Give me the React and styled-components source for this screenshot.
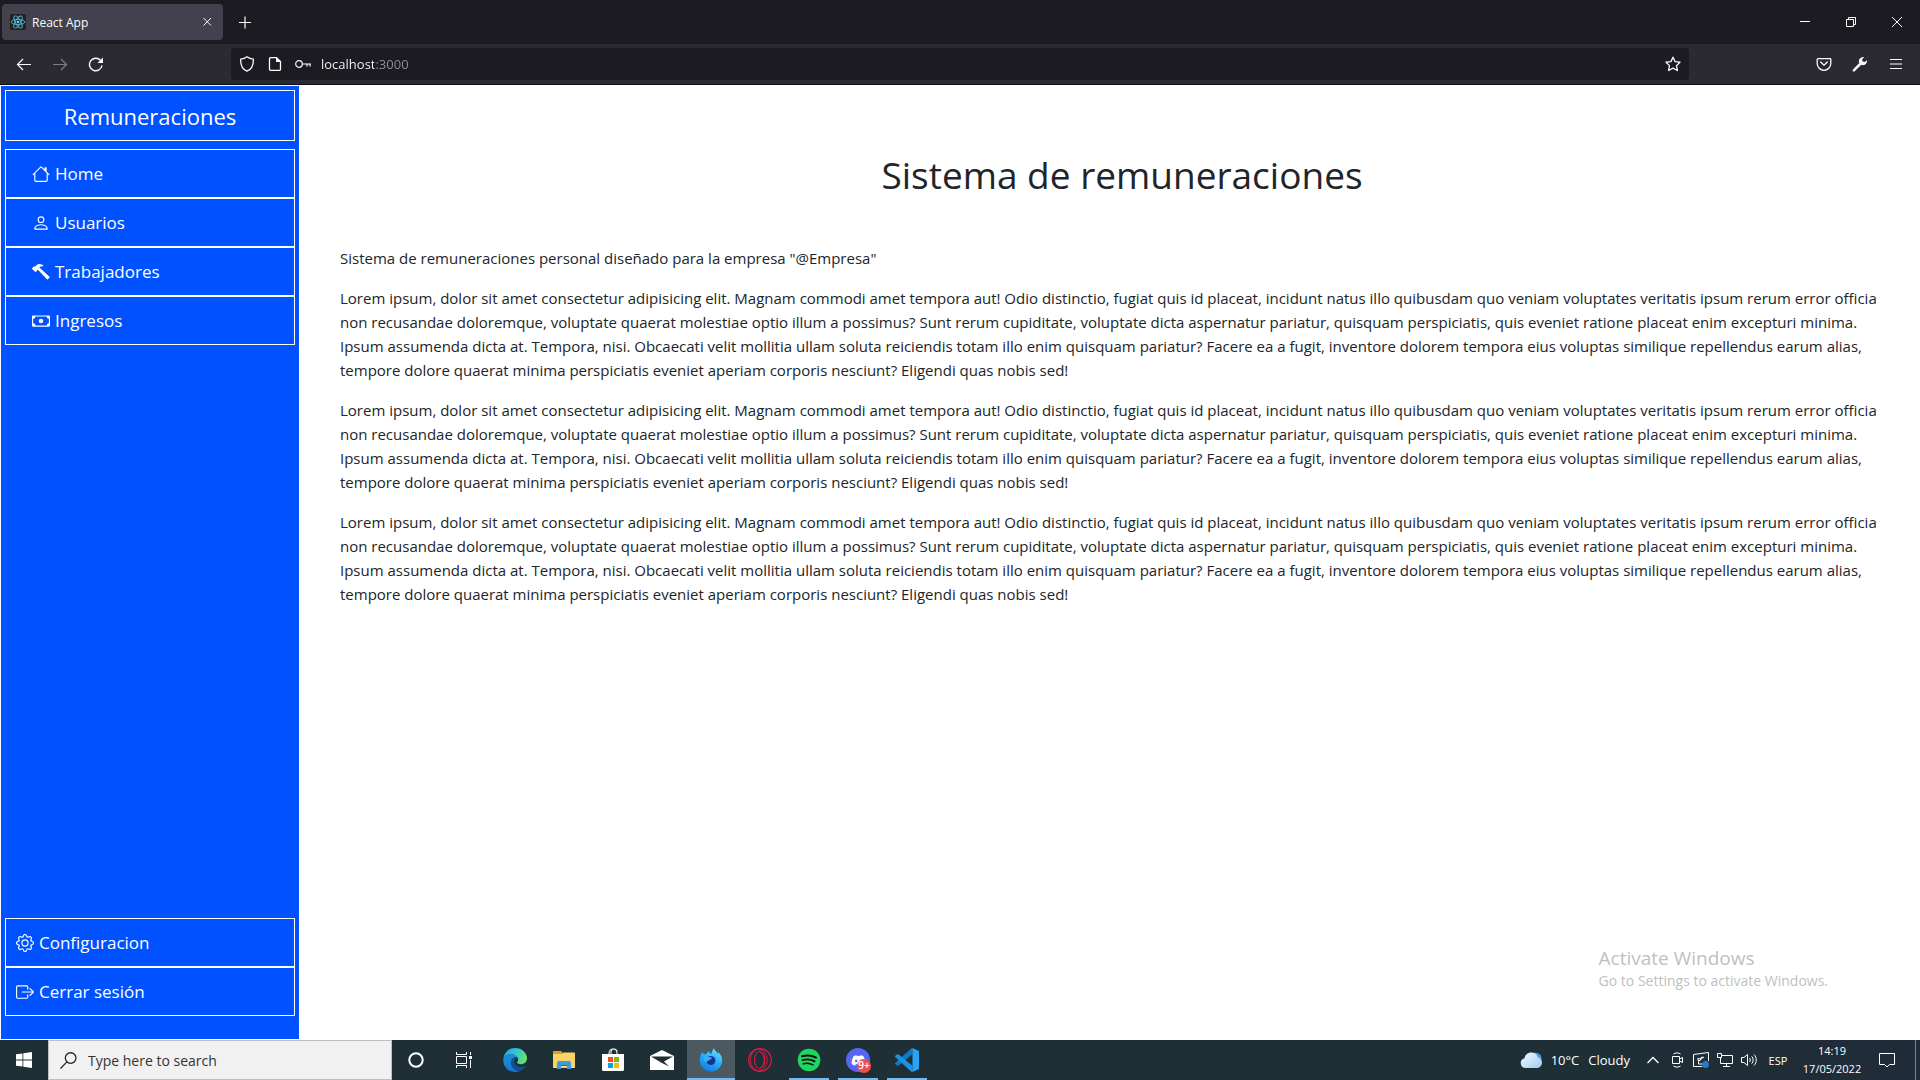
import React from 'react';
import styled, { createGlobalStyle } from 'styled-components';
import { BsHouse, BsPerson, BsHammer, BsCash, BsGear, BsBoxArrowRight } from 'react-icons/bs';
import { FaDiscord } from 'react-icons/fa';

const GlobalStyle = createGlobalStyle`
  *, *::before, *::after { box-sizing: border-box; }
  body { margin: 0; background: #fff; color: #212529; font-family: 'Open Sans', 'Noto Sans', sans-serif; }
  button, input { font: inherit; color: inherit; }
  button { background: none; border: 0; padding: 0; cursor: pointer; }
  a { color: inherit; text-decoration: none; }
  p, h1, h2 { margin: 0; font-weight: 400; }
  svg { display: block; flex: none; }
`;

const Desktop = styled.div`
  display: flex;
  flex-direction: column;
  min-height: 100vh;
`;

/* ---------- Browser ---------- */

const TabStrip = styled.header`
  display: flex;
  height: 44px;
  background: #1c1b22;
  color: #fbfbfe;
`;

const Tab = styled.div`
  display: flex;
  align-items: center;
  gap: 6px;
  width: 221px;
  height: 36px;
  margin: 4px 4px 4px 2px;
  padding: 0 4px 0 8px;
  border-radius: 4px;
  background: #42414d;
  font-size: 12px;
`;

const TabTitle = styled.span`
  flex: 1;
`;

const IconButton = styled.button`
  display: flex;
  align-items: center;
  justify-content: center;
  width: ${(p) => p.$w || 36}px;
  height: ${(p) => p.$h || 40}px;
  opacity: ${(p) => (p.$dim ? 0.4 : 1)};
`;

const WindowControls = styled.div`
  display: flex;
  margin-left: auto;
`;

const NavBar = styled.nav`
  display: flex;
  align-items: center;
  height: 41px;
  padding: 0 6px;
  background: #2b2a33;
  border-bottom: 1px solid #0c0c0d;
  color: #fbfbfe;
`;

const UrlBar = styled.div`
  display: flex;
  align-items: center;
  flex: 1;
  height: 32px;
  margin: 0 117px;
  padding: 0 2px;
  border-radius: 4px;
  background: #1c1b22;
`;

const UrlInput = styled.input`
  flex: 1;
  min-width: 0;
  height: 32px;
  margin-left: 4px;
  padding: 0;
  border: 0;
  outline: 0;
  font-size: 13px;
  color: transparent;
  caret-color: #fbfbfe;
  background: linear-gradient(90deg, #fbfbfe 53px, #8f8f9d 53px);
  background-clip: text;
`;

/* ---------- Page ---------- */

const Page = styled.div`
  display: flex;
  flex: 1;
`;

const Sidebar = styled.aside`
  display: flex;
  flex-direction: column;
  width: 300px;
  padding: 4px 4px 23px;
  border: 1px solid #fff;
  background: #0051ff;
  color: #fff;
`;

const Brand = styled.h2`
  margin-bottom: 8px;
  padding-top: 1px;
  border: 1px solid #fff;
  text-align: center;
  font-size: 22px;
  line-height: 48px;
`;

const Menu = styled.nav`
  display: flex;
  flex-direction: column;
  margin-top: ${(p) => (p.$bottom ? 'auto' : '0')};
`;

const MenuLink = styled.a`
  display: flex;
  align-items: center;
  gap: 5px;
  height: 49px;
  padding-left: ${(p) => (p.$nested ? 26 : 10)}px;
  border: 1px solid #fff;
  font-size: 17px;
`;

const Main = styled.main`
  flex: 1;
  min-width: 0;
  padding: 66px 16px 16px 40px;
`;

const Title = styled.h1`
  margin-bottom: 47px;
  text-align: center;
  font-size: 37px;
  line-height: 48px;
`;

const Paragraph = styled.p`
  margin-bottom: 16px;
  font-size: 15px;
  line-height: 24px;
`;

const Watermark = styled.div`
  position: absolute;
  right: 92px;
  bottom: 89px;
  color: #bfbfbf;
`;

const WatermarkTitle = styled.p`
  font-size: 19px;
  line-height: 25px;
`;

const WatermarkText = styled.p`
  font-size: 14px;
  line-height: 20px;
`;

/* ---------- Taskbar ---------- */

const Taskbar = styled.footer`
  display: flex;
  height: 40px;
  background: linear-gradient(90deg, #1f2f36 0%, #1f2f36 85%, #202b39 100%);
  color: #fff;
`;

const SearchBox = styled.label`
  display: flex;
  align-items: center;
  gap: 11px;
  width: 344px;
  padding-left: 11px;
  border: 1px solid #bebebe;
  background: #f1f1f1;
  color: #222;
`;

const SearchInput = styled.input`
  flex: 1;
  min-width: 0;
  padding: 0;
  border: 0;
  outline: 0;
  background: transparent;
  font-size: 14px;
  &::placeholder { color: #333; opacity: 1; }
`;

const Apps = styled.div`
  display: flex;
  gap: 1px;
  margin-left: 3px;
`;

const AppButton = styled.button`
  position: relative;
  display: flex;
  align-items: center;
  justify-content: center;
  width: 48px;
  height: 40px;
  background: ${(p) => (p.$active ? '#4b5a60' : 'transparent')};
  &::after {
    content: '';
    position: absolute;
    bottom: 0;
    left: ${(p) => (p.$active ? 0 : 4)}px;
    right: ${(p) => (p.$active ? 0 : 4)}px;
    height: 2px;
    background: ${(p) => (p.$active || p.$running ? '#76b9ed' : 'transparent')};
  }
`;

const Badge = styled.span`
  position: absolute;
  left: 23px;
  top: 19px;
  width: 14px;
  height: 14px;
  border-radius: 7px;
  background: #ed4f50;
  font-size: 10px;
  font-weight: 600;
  line-height: 13px;
  text-align: center;
`;

const Tray = styled.div`
  display: flex;
  align-items: center;
  margin-left: auto;
`;

const Weather = styled.button`
  display: flex;
  align-items: center;
  gap: 9px;
  height: 40px;
  padding-right: 11px;
  font-size: 13px;
`;

const Language = styled.button`
  width: 34px;
  height: 40px;
  font-size: 11px;
`;

const Clock = styled.button`
  width: 74px;
  font-size: 11px;
  line-height: 18px;
`;

const ShowDesktop = styled.button`
  width: 5px;
  height: 40px;
  margin-left: 10px;
  border-left: 1px solid #7b858b;
`;

/* ---------- Icons ---------- */

const Line = ({ size = 16, box = 16, w = 1, children }) => (
  <svg width={size} height={size} viewBox={`0 0 ${box} ${box}`} fill="none" stroke="currentColor" strokeWidth={w} aria-hidden="true">
    {children}
  </svg>
);

const ReactLogo = () => (
  <svg width="16" height="16" viewBox="0 0 16 16" aria-hidden="true">
    <rect width="16" height="16" rx="2" fill="#222" />
    <g fill="none" stroke="#53b5d0" strokeWidth="0.9">
      <ellipse cx="8" cy="8" rx="6.8" ry="2.6" />
      <ellipse cx="8" cy="8" rx="6.8" ry="2.6" transform="rotate(60 8 8)" />
      <ellipse cx="8" cy="8" rx="6.8" ry="2.6" transform="rotate(120 8 8)" />
    </g>
    <circle cx="8" cy="8" r="1.3" fill="#61dafb" />
  </svg>
);

const EdgeIcon = () => (
  <svg width="24" height="24" viewBox="0 0 24 24" aria-hidden="true">
    <defs>
      <linearGradient id="edgeTop" x1="0" y1="0.3" x2="1" y2="0.5">
        <stop offset="0" stopColor="#2aa7e0" />
        <stop offset="0.5" stopColor="#2fc3d8" />
        <stop offset="1" stopColor="#6ae667" />
      </linearGradient>
      <linearGradient id="edgeSide" x1="0.3" y1="0" x2="0.5" y2="1">
        <stop offset="0" stopColor="#1b8fd8" />
        <stop offset="1" stopColor="#1577d0" />
      </linearGradient>
    </defs>
    <path fill="url(#edgeSide)" d="M.4 10.5C1.4 8 4 6.3 8 6.3c3 0 6 1.500 6.900 3.700C13 8.400 8.500 9 8.200 14.200 8 19 12 23 17 23c-1.500.7-3.200 1-5 1C5 24-.6 18.500.4 10.500Z" />
    <path fill="#124f93" d="M8.200 14.200C8.500 10.500 11 9 13.500 9.700c-1.500.8-2.500 2.300-2.200 4.200.5 3.100 3.700 5.100 7 4.900 1.700-.1 3-.7 3.700-1.100.5-.2.8.1.5.6C21.200 20.500 19.300 22.200 17 23c-5 0-9-4-8.800-8.800Z" />
    <path fill="url(#edgeTop)" d="M.4 10.500C1.300 4.400 6 0 12 0c7 0 12 5 12 10.200 0 3.800-2.800 6-6 6-2.500 0-4.200-.8-4.200-1.600 0-.6 1.400-1.200 1.400-3.100 0-2.500-3.200-5.200-7.200-5.200S1.400 8 .4 10.500Z" />
  </svg>
);

const ExplorerIcon = () => (
  <svg width="22" height="18" viewBox="0 0 22 18" aria-hidden="true">
    <path fill="#e0a015" d="M0 1C0 .4.4 0 1 0h7l2 2v3H0Z" />
    <path fill="#fbd267" d="M0 3h9l1.500-1.500H21c.6 0 1 .4 1 1V17H0Z" />
    <path fill="#3c9be0" d="M4 18v-6c0-1.200.8-2 2-2h10c1.200 0 2 .8 2 2v6h-4v-4H8v4Z" />
    <path fill="#1f6fb8" d="M8 14h6v1H8Z" />
  </svg>
);

const StoreIcon = () => (
  <svg width="24" height="24" viewBox="0 0 24 24" aria-hidden="true">
    <path d="M8 7V5a4 4 0 0 1 8 0v2M10 7V4a3 3 0 0 1 6 0" fill="none" stroke="#eee" strokeWidth="1.1" />
    <path d="M1 6h22v15.500a1.500 1.500 0 0 1-1.500 1.500h-19A1.500 1.500 0 0 1 1 21.500Z" fill="#fff" />
    <path fill="#f25022" d="M7 9h5v5H7Z" />
    <path fill="#7fba00" d="M13 9h5v5h-5Z" />
    <path fill="#00a4ef" d="M7 15h5v5H7Z" />
    <path fill="#ffb900" d="M13 15h5v5h-5Z" />
  </svg>
);

const MailIcon = () => (
  <svg width="24" height="20" viewBox="0 0 24 20" aria-hidden="true">
    <path fill="#fff" d="M0 6 12 0l12 6v14H0Z" />
    <path fill="#1f2f36" d="M1 6.500h22L14 11.500l5 5-8-4Z" />
  </svg>
);

const FirefoxIcon = () => (
  <svg width="24" height="24" viewBox="0 0 24 24" aria-hidden="true">
    <defs>
      <linearGradient id="foxBlue" x1="0.8" y1="0" x2="0.3" y2="1">
        <stop offset="0" stopColor="#6fe3f9" />
        <stop offset="0.45" stopColor="#29b5fb" />
        <stop offset="1" stopColor="#1479e0" />
      </linearGradient>
    </defs>
    <path fill="url(#foxBlue)" d="M3.500 4c.2 1 .7 1.700 1.400 2.300.7-.4 1.600-.5 2.400-.3C7.900 4.700 9 3.700 10.300 3.300 10 4.500 10.800 5.500 12 6c1.300-1.500 1.200-4.200 3-5.700.3 1.600 1.500 2.600 2.800 3.900.6.6 1 1.300 1.300 2.100.2-.8.1-1.500-.1-2.300 2.200 1.800 4.200 4.600 4.200 8.300C23.200 19 18.300 23.500 12 23.500S.8 19 .8 12.500C.8 9 1.600 6 3.500 4Z" />
    <circle cx="11.8" cy="12.5" r="4.600" fill="#242c92" />
    <path fill="#2fb4f5" d="M5 8.500c2-1 4.300-.7 5.500.8 1.300-.1 2.600.1 2.600.8-.3 1.200-2.600 1.200-3.200 2.300-1 .3-2.300 1-2.500 2.300C5.500 13 4.600 11 5 8.500Z" />
  </svg>
);

const OperaIcon = () => (
  <svg width="24" height="24" viewBox="0 0 24 24" fill="none" stroke="#dc1c48" aria-hidden="true">
    <circle cx="12" cy="12" r="11.300" strokeWidth="1.2" />
    <ellipse cx="10.800" cy="12" rx="8.400" ry="10.800" strokeWidth="0.9" />
    <ellipse cx="11.500" cy="12" rx="5" ry="8.500" strokeWidth="1" />
    <path d="M12.500 4c2.500 1 4 4 4 8s-1.500 7-4 8" strokeWidth="1.2" />
  </svg>
);

const SpotifyIcon = () => (
  <svg width="24" height="24" viewBox="0 0 24 24" aria-hidden="true">
    <circle cx="12" cy="12" r="11.300" fill="#1ed760" />
    <g fill="none" stroke="#111" strokeLinecap="round">
      <path d="M5 8.300c4.800-1.400 10-.9 14 1.300" strokeWidth="2.1" />
      <path d="M5.600 12.100c4.200-1.200 8.600-.7 12 1.300" strokeWidth="1.8" />
      <path d="M6.200 15.700c3.500-.9 7-.5 9.900 1.100" strokeWidth="1.5" />
    </g>
  </svg>
);

const DiscordTile = styled.span`
  display: flex;
  align-items: center;
  justify-content: center;
  width: 24px;
  height: 24px;
  border-radius: 12px;
  background: #5865f2;
`;

const CodeIcon = () => (
  <svg width="24" height="24" viewBox="0 0 24 24" aria-hidden="true">
    <path fill="#0b7bc4" d="M17.500 6.300 3.300 17.800l-1.500-.2L.3 16.300c-.4-.4-.4-1 0-1.400L16 .6c.4-.4 1-.6 1.500-.6Z" />
    <path fill="#1d93e0" d="M17.500 24v-6.300L3.300 6.200l-1.500.2L.3 7.700c-.4.4-.4 1 0 1.400L16 23.400c.4.4 1 .6 1.500.6Z" />
    <path fill="#28a4f4" d="M17.500 0 24 3v18l-6.500 3Z" />
  </svg>
);

const CloudIcon = () => (
  <svg width="22" height="16" viewBox="0 0 22 16" aria-hidden="true">
    <defs>
      <linearGradient id="cloud" x1="0" y1="0" x2="1" y2="1">
        <stop offset="0" stopColor="#f4faff" />
        <stop offset="1" stopColor="#9dcdf3" />
      </linearGradient>
    </defs>
    <path fill="#4d9de0" d="M13 1c5-1 9 1.500 8.500 7L15 9Z" />
    <path fill="url(#cloud)" d="M5 16a5 5 0 0 1-.5-9.800C5 2.800 7.800.5 11.200.5c3.600 0 6 2.200 6.600 5.100C20.300 6 22 8 22 10.500 22 13.500 19.800 16 17 16Z" />
  </svg>
);

const LOREM = [
  'Lorem ipsum, dolor sit amet consectetur adipisicing elit. Magnam commodi amet tempora aut! Odio distinctio, fugiat quis id placeat, incidunt natus illo quibusdam quo veniam voluptates veritatis ipsum rerum error officia',
  'non recusandae doloremque, voluptate quaerat molestiae optio illum a possimus? Sunt rerum cupiditate, voluptate dicta aspernatur pariatur, quisquam perspiciatis, quis eveniet ratione placeat enim excepturi minima.',
  'Ipsum assumenda dicta at. Tempora, nisi. Obcaecati velit mollitia ullam soluta reiciendis totam illo enim quisquam pariatur? Facere ea a fugit, inventore dolorem tempora eius voluptas similique repellendus earum alias,',
  'tempore dolore quaerat minima perspiciatis eveniet aperiam corporis nesciunt? Eligendi quas nobis sed!',
].join(' ');

const MENU = [
  { label: 'Home', Icon: BsHouse },
  { label: 'Usuarios', Icon: BsPerson },
  { label: 'Trabajadores', Icon: BsHammer },
  { label: 'Ingresos', Icon: BsCash },
];

const SETTINGS = [
  { label: 'Configuracion', Icon: BsGear },
  { label: 'Cerrar sesión', Icon: BsBoxArrowRight },
];

const APPS = [
  { name: 'Edge', Icon: EdgeIcon },
  { name: 'File Explorer', Icon: ExplorerIcon },
  { name: 'Store', Icon: StoreIcon },
  { name: 'Mail', Icon: MailIcon },
  { name: 'Firefox', Icon: FirefoxIcon, active: true },
  { name: 'Opera GX', Icon: OperaIcon },
  { name: 'Spotify', Icon: SpotifyIcon, running: true },
  { name: 'Discord', Icon: () => <DiscordTile><FaDiscord size={15} /></DiscordTile>, running: true, badge: '9+' },
  { name: 'Visual Studio Code', Icon: CodeIcon, running: true },
];

function Browser() {
  return (
    <>
      <TabStrip>
        <Tab>
          <ReactLogo />
          <TabTitle>React App</TabTitle>
          <IconButton $w={24} $h={24} aria-label="Close tab">
            <Line><path d="m4.500 4 7.500 7.500M12 4 4.500 11.500" /></Line>
          </IconButton>
        </Tab>
        <IconButton $h={44} aria-label="New tab">
          <Line w={1.2}><path d="M8 2.500v12M2 8.500h12" /></Line>
        </IconButton>
        <WindowControls>
          <IconButton $w={46} $h={44} aria-label="Minimize"><Line size={10} box={10}><path d="M0 4.500h10" /></Line></IconButton>
          <IconButton $w={46} $h={44} aria-label="Restore"><Line size={10} box={10}><path d="M.5 2.500h7v7h-7ZM2.500 2.500v-2h7v7h-2" /></Line></IconButton>
          <IconButton $w={46} $h={44} aria-label="Close"><Line size={10} box={10}><path d="m0 0 10 10M10 0 0 10" /></Line></IconButton>
        </WindowControls>
      </TabStrip>
      <NavBar>
        <IconButton aria-label="Back"><Line w={1.2}><path d="M15 8.500H1.500M7 3 1.500 8.500 7 14" /></Line></IconButton>
        <IconButton $dim aria-label="Forward"><Line w={1.2}><path d="M1 8.500h13.500M9 3l5.500 5.500L9 14" /></Line></IconButton>
        <IconButton aria-label="Reload">
          <Line w={1.4}><path d="M14 9.500a6.300 6.300 0 1 1-1.500-5.200" /><path d="M15 1.500V7H9.500Z" fill="currentColor" stroke="none" /></Line>
        </IconButton>
        <UrlBar>
          <IconButton $w={28} $h={32} aria-label="Tracking protection">
            <Line w={1.3}><path d="M8 .8c2 1.600 4 2.200 6.300 2.400C14.600 8.500 13 13 8 15.200 3 13 1.400 8.500 1.700 3.200 4 3 6 2.400 8 .8Z" strokeLinejoin="round" /></Line>
          </IconButton>
          <IconButton $w={28} $h={32} aria-label="Site information">
            <Line w={1.3}><path d="M9.500 1.700h-6a1 1 0 0 0-1 1v10.600a1 1 0 0 0 1 1h9a1 1 0 0 0 1-1V5.500Z" /><path d="M9 1v5h5Z" fill="currentColor" stroke="none" /></Line>
          </IconButton>
          <IconButton $w={28} $h={32} aria-label="Saved logins">
            <Line w={1.2}><circle cx="4" cy="8" r="3.300" /><path d="M7.300 8H16M12 8v2.500M15 8v2.500" /></Line>
          </IconButton>
          <UrlInput aria-label="Address" defaultValue="localhost:3000" />
          <IconButton $w={28} $h={32} aria-label="Bookmark">
            <Line w={1.3}><path d="m8 1.200 2.100 4.400 4.900.6-3.500 3.400.9 4.900L8 12.200l-4.400 2.300.9-4.900L1 6.200l4.900-.6Z" strokeLinejoin="round" /></Line>
          </IconButton>
        </UrlBar>
        <IconButton aria-label="Pocket">
          <Line w={1.3}><path d="M2 2.700h12a.8.8 0 0 1 .8.8V7.500a6.800 6.800 0 0 1-13.600 0V3.500A.8.8 0 0 1 2 2.700Z" /><path d="m4.700 6 3.300 3.200L11.300 6" strokeLinecap="round" /></Line>
        </IconButton>
        <IconButton aria-label="Developer tools">
          <Line><path d="M15 4.200a4.200 4.200 0 0 1-5.700 4.600L2.700 15.200a1 1 0 0 1-1.700-1.600L7.300 7a4.200 4.200 0 0 1 4.900-5.800L10 3.500l.6 2.100 2.100.5Z" fill="currentColor" stroke="none" /></Line>
        </IconButton>
        <IconButton aria-label="Menu"><Line w={1.2}><path d="M2 3.500h12M2 8h12M2 12.500h12" /></Line></IconButton>
      </NavBar>
    </>
  );
}

function SideMenu({ items, nested, bottom }) {
  return (
    <Menu $bottom={bottom}>
      {items.map(({ label, Icon }) => (
        <MenuLink key={label} href="#" $nested={nested}>
          <Icon size={18} />
          {label}
        </MenuLink>
      ))}
    </Menu>
  );
}

function WindowsTaskbar() {
  return (
    <Taskbar>
      <IconButton $w={48} aria-label="Start">
        <svg width="16" height="16" viewBox="0 0 16 16" fill="#fff" aria-hidden="true">
          <path d="M0 2.300 6.500 1.400v6.200H0ZM7.300 1.200 16 0v7.600H7.300ZM0 8.400h6.500v6.200L0 13.700ZM7.300 8.400H16V16l-8.700-1.200Z" />
        </svg>
      </IconButton>
      <SearchBox>
        <Line size={17} w={1.2}><circle cx="10" cy="5.700" r="5" /><path d="M6.500 9.300.5 15.500" /></Line>
        <SearchInput aria-label="Search" placeholder="Type here to search" />
      </SearchBox>
      <IconButton $w={48} aria-label="Cortana"><Line w={2}><circle cx="8" cy="8" r="6.700" /></Line></IconButton>
      <IconButton $w={48} aria-label="Task view">
        <Line><path d="M.5 4.500h10v7H.5ZM.5 0v2.500h10V0M.5 16v-2.500h10V16M14.500 0v3M14.500 8v8" /><path d="M13 4h3v3h-3Z" fill="currentColor" stroke="none" /></Line>
      </IconButton>
      <Apps>
        {APPS.map(({ name, Icon, active, running, badge }) => (
          <AppButton key={name} aria-label={name} $active={active} $running={running}>
            <Icon />
            {badge && <Badge>{badge}</Badge>}
          </AppButton>
        ))}
      </Apps>
      <Tray>
        <Weather><CloudIcon /><span>10°C</span><span>Cloudy</span></Weather>
        <IconButton $w={24} aria-label="Show hidden icons"><Line size={12} box={12} w={1.3}><path d="m.5 9 5.500-5.500L11.500 9" /></Line></IconButton>
        <IconButton $w={24} aria-label="Meet now">
          <Line><path d="M3.500 4.500h7v7h-7ZM10.500 7l3-1.500v5l-3-1.500M4.500 2c2-1.500 5-1.500 7 0M4.500 14c2 1.500 5 1.500 7 0" /></Line>
        </IconButton>
        <IconButton $w={24} aria-label="Display">
          <Line><path d="M.5 2.500 15.500.5V9M.5 2.500v12H9M9 6 5 7M5 6v2.500h2.500M5.500 12h4M5.500 12V9.500L10 5.500M8 5.300h3" /><circle cx="12.500" cy="12.500" r="3.500" fill="#2b78c8" stroke="none" /></Line>
        </IconButton>
        <IconButton $w={24} aria-label="Network">
          <Line><path d="M5 3.500h10.500v8H3.500V6M.5 1.500h4v4h-4ZM9.500 11.500v3M6 14.500h7" /></Line>
        </IconButton>
        <IconButton $w={24} aria-label="Volume">
          <Line><path d="M.5 5.500H3l3.500-3v11L3 10.500H.5ZM8.500 6c1 1 1 3 0 4M10.700 4.300c2 2 2 5.400 0 7.400M13 2.500c3 3 3 8 0 11" /></Line>
        </IconButton>
        <Language>ESP</Language>
        <Clock>14:19<br />17/05/2022</Clock>
        <IconButton aria-label="Notifications"><Line><path d="M.5 1.500h15v11h-5L8 15l-2.500-2.500h-5Z" /></Line></IconButton>
        <ShowDesktop aria-label="Show desktop" />
      </Tray>
    </Taskbar>
  );
}

export default function App() {
  return (
    <Desktop>
      <GlobalStyle />
      <Browser />
      <Page>
        <Sidebar>
          <Brand>Remuneraciones</Brand>
          <SideMenu items={MENU} nested />
          <SideMenu items={SETTINGS} bottom />
        </Sidebar>
        <Main>
          <Title>Sistema de remuneraciones</Title>
          <Paragraph>Sistema de remuneraciones personal diseñado para la empresa "@Empresa"</Paragraph>
          {[1, 2, 3].map((n) => <Paragraph key={n}>{LOREM}</Paragraph>)}
        </Main>
      </Page>
      <Watermark>
        <WatermarkTitle>Activate Windows</WatermarkTitle>
        <WatermarkText>Go to Settings to activate Windows.</WatermarkText>
      </Watermark>
      <WindowsTaskbar />
    </Desktop>
  );
}
